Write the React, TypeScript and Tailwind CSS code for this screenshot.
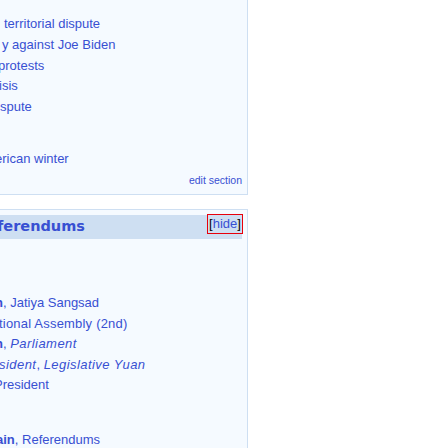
const linkColor = 'text-[#3850d2]';

const Line = ({ children, className = '' }: { children: React.ReactNode; className?: string }) => (
  <div className={`whitespace-nowrap ${className}`}>{children}</div>
);

const Em = ({ children }: { children: React.ReactNode }) => <i className="tracking-[0.45px]">{children}</i>;

export default function App() {
  return (
    <div className="w-[448px] h-[448px] overflow-hidden bg-white font-['Liberation_Sans',Arial,sans-serif] text-[13px]">
      {/* Ongoing box (bottom part) */}
      <div className="w-[248px] h-[195px] overflow-hidden bg-[#f5faff] border-r border-b border-[#cedff2]">
        <div className={`pt-[14px] leading-[20.75px] ${linkColor}`}>
          <Line className="ml-[4px]">territorial dispute</Line>
          <Line className="ml-[2px]">y against Joe Biden</Line>
          <Line className="-ml-[2px]">protests</Line>
          <Line className="-ml-[1px]">isis</Line>
          <Line>spute</Line>
          <Line className="-ml-[5px] mt-[31px]">erican winter</Line>
        </div>
        <div className={`mt-[3px] pr-[5px] text-right text-[10.5px] leading-[14px] ${linkColor}`}>
          edit section
        </div>
      </div>

      {/* Elections and referendums box */}
      <div className="mt-[14px] w-[248px] h-[260px] overflow-hidden bg-[#f5faff] border-t border-r border-[#cedff2] pt-[5px]">
        <div className="relative w-[242px] h-[24px] bg-[#cedff2] flex items-center">
          <span className={`-ml-[3px] font-['DejaVu_Sans',sans-serif] font-bold text-[14.5px] ${linkColor}`}>
            ferendums
          </span>
          <div className="absolute left-[207px] -top-[1px] w-[36px] h-[20px] border border-[#e8000b] flex items-center justify-center text-[13px]">
            <span className="text-black">[</span>
            <span className={linkColor}>hide</span>
            <span className="text-black">]</span>
          </div>
        </div>
        <div className={`mt-[54px] leading-[20.5px] ${linkColor}`}>
          <Line className="-ml-[5px]">
            <b>n</b>, Jatiya Sangsad
          </Line>
          <Line className="-ml-[1px] tracking-[0.2px]">tional Assembly (2nd)</Line>
          <Line className="-ml-[5px]">
            <b>n</b>, <Em>Parliament</Em>
          </Line>
          <Line className="-ml-[1px]">
            <Em>sident</Em>, <Em>Legislative Yuan</Em>
          </Line>
          <Line className="-ml-[6px]">President</Line>
          <Line className="-ml-[4px] mt-[34px]">
            <b>ain</b>, Referendums
          </Line>
        </div>
      </div>
    </div>
  );
}
